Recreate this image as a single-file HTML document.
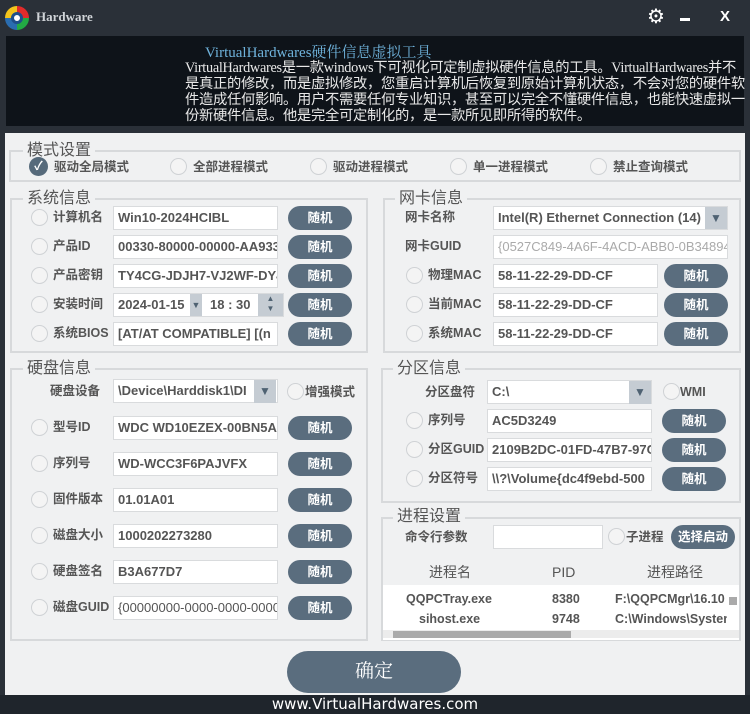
<!DOCTYPE html>
<html><head><meta charset="utf-8"><style>
*{margin:0;padding:0;box-sizing:border-box}
body{width:750px;height:714px;background:#2a3038;position:relative;overflow:hidden;font-family:"Liberation Sans","Noto Sans CJK SC",sans-serif}
.a{position:absolute}
.panel{left:5px;top:133px;width:740px;height:562px;background:#f0f1f2}
.banner{left:6px;top:36px;width:738px;height:90px;background:#0e1319}
.box{position:absolute;border:2px solid #d7d9db;background:#f0f1f2}
.lg{position:absolute;background:#f0f1f2;font-size:16px;color:#555;padding:0 4px;line-height:18px}
.rd{position:absolute;width:17px;height:17px;border-radius:50%;border:1px solid #cfd2d5;background:#f4f4f4}
.lb{position:absolute;font-size:12.5px;font-weight:bold;color:#555;line-height:16px;white-space:nowrap}
.in{position:absolute;height:24px;background:#fff;border:1px solid #d9dbdd;font-size:13px;font-weight:bold;color:#555;line-height:22px;padding-left:4px;overflow:hidden;white-space:nowrap;font-family:"Liberation Sans","Noto Sans CJK SC",sans-serif}
.bt{position:absolute;width:64px;height:24px;border-radius:12px;background:#5a6d7e;color:#fff;font-size:12.5px;font-weight:bold;text-align:center;line-height:24px}
.dd{position:absolute;width:22px;height:22px;background:#c5ccd3;color:#4f6272;font-size:12px;text-align:center;line-height:22px}
.tb{position:absolute;font-size:12.5px;font-weight:bold;color:#555;line-height:16px;white-space:nowrap;overflow:hidden}
</style></head><body>
<div class="a" style="left:5px;top:6px;width:24px;height:24px;border-radius:50%;background:conic-gradient(#e12b2b 0 90deg,#22aa44 90deg 180deg,#2a6db0 180deg 270deg,#f2c41c 270deg 360deg)"></div>
<div class="a" style="left:11px;top:12px;width:12px;height:12px;border-radius:50%;background:#fff;border:3px solid #1e4f8a"></div>
<div class="a" style="left:36px;top:9px;font-family:'Liberation Serif',serif;font-size:13px;font-weight:bold;color:#d0d4d8">Hardware</div>
<div class="a" style="left:647px;top:7px;color:#fff;font-size:20px;line-height:20px">⚙</div>
<div class="a" style="left:680px;top:18px;width:10px;height:3px;background:#fff"></div>
<div class="a" style="left:720px;top:8px;color:#fff;font-size:15px;font-weight:bold">X</div>
<div class="a banner"></div>
<div class="a" style="left:205px;top:41px;font-family:'Liberation Serif','Noto Serif CJK SC',serif;font-size:15px;color:#6fb3dc">VirtualHardwares硬件信息虚拟工具</div>
<div class="a" style="left:185px;top:60px;width:562px;font-family:'Liberation Serif','Noto Sans CJK SC',serif;font-size:14.3px;line-height:16px;color:#e8e8e8;letter-spacing:-0.3px">VirtualHardwares是一款windows下可视化可定制虚拟硬件信息的工具。VirtualHardwares并不是真正的修改，而是虚拟修改，您重启计算机后恢复到原始计算机状态，不会对您的硬件软件造成任何影响。用户不需要任何专业知识，甚至可以完全不懂硬件信息，也能快速虚拟一份新硬件信息。他是完全可定制化的，是一款所见即所得的软件。</div>
<div class="a panel"></div>

<div class="box" style="left:9px;top:150px;width:732px;height:32px"></div>
<div class="lg" style="left:23px;top:142px">模式设置</div>
<div class="a" style="left:29px;top:157px;width:19px;height:19px;border-radius:50%;background:#566a7b;color:#fff;font-size:12px;text-align:center;line-height:19px;font-weight:bold">✓</div>
<div class="lb" style="left:54px;top:159px">驱动全局模式</div>
<div class="rd" style="left:170px;top:158px"></div><div class="lb" style="left:193px;top:159px">全部进程模式</div>
<div class="rd" style="left:310px;top:158px"></div><div class="lb" style="left:333px;top:159px">驱动进程模式</div>
<div class="rd" style="left:450px;top:158px"></div><div class="lb" style="left:473px;top:159px">单一进程模式</div>
<div class="rd" style="left:590px;top:158px"></div><div class="lb" style="left:613px;top:159px">禁止查询模式</div>

<div class="box" style="left:10px;top:198px;width:358px;height:155px"></div>
<div class="lg" style="left:23px;top:190px">系统信息</div>
<div class="rd" style="left:31px;top:209px"></div><div class="lb" style="left:53px;top:209px">计算机名</div><div class="in" style="left:113px;top:206px;width:165px">Win10-2024HCIBL</div><div class="bt" style="left:288px;top:206px">随机</div>
<div class="rd" style="left:31px;top:238px"></div><div class="lb" style="left:53px;top:238px">产品ID</div><div class="in" style="left:113px;top:235px;width:165px">00330-80000-00000-AA933</div><div class="bt" style="left:288px;top:235px">随机</div>
<div class="rd" style="left:31px;top:267px"></div><div class="lb" style="left:53px;top:267px">产品密钥</div><div class="in" style="left:113px;top:264px;width:165px">TY4CG-JDJH7-VJ2WF-DY4</div><div class="bt" style="left:288px;top:264px">随机</div>
<div class="rd" style="left:31px;top:296px"></div><div class="lb" style="left:53px;top:296px">安装时间</div><div class="in" style="left:113px;top:293px;width:171px">2024-01-15</div>
<div class="a" style="left:210px;top:297px;font-size:13px;font-weight:bold;color:#555;line-height:16px">18 : 30</div>
<div class="a" style="left:190px;top:294px;width:12px;height:22px;background:#c5ccd3;color:#4f6272;font-size:9px;text-align:center;line-height:22px">▼</div>
<div class="a" style="left:258px;top:294px;width:25px;height:22px;background:#c5ccd3;color:#4f6272;font-size:8px;text-align:center;line-height:10px">▲<br>▼</div>
<div class="bt" style="left:288px;top:293px">随机</div>
<div class="rd" style="left:31px;top:325px"></div><div class="lb" style="left:53px;top:325px">系统BIOS</div><div class="in" style="left:113px;top:322px;width:165px">[AT/AT COMPATIBLE] [(n</div><div class="bt" style="left:288px;top:322px">随机</div>

<div class="box" style="left:383px;top:198px;width:358px;height:155px"></div>
<div class="lg" style="left:395px;top:190px">网卡信息</div>
<div class="lb" style="left:405px;top:209px">网卡名称</div><div class="in" style="left:493px;top:206px;width:235px">Intel(R) Ethernet Connection (14)</div><div class="dd" style="left:705px;top:207px">▼</div>
<div class="lb" style="left:405px;top:238px">网卡GUID</div><div class="in" style="left:493px;top:235px;width:235px;color:#aaa;font-weight:normal">{0527C849-4A6F-4ACD-ABB0-0B34894</div>
<div class="rd" style="left:406px;top:267px"></div><div class="lb" style="left:428px;top:267px">物理MAC</div><div class="in" style="left:493px;top:264px;width:165px">58-11-22-29-DD-CF</div><div class="bt" style="left:664px;top:264px">随机</div>
<div class="rd" style="left:406px;top:296px"></div><div class="lb" style="left:428px;top:296px">当前MAC</div><div class="in" style="left:493px;top:293px;width:165px">58-11-22-29-DD-CF</div><div class="bt" style="left:664px;top:293px">随机</div>
<div class="rd" style="left:406px;top:325px"></div><div class="lb" style="left:428px;top:325px">系统MAC</div><div class="in" style="left:493px;top:322px;width:165px">58-11-22-29-DD-CF</div><div class="bt" style="left:664px;top:322px">随机</div>

<div class="box" style="left:10px;top:368px;width:358px;height:273px"></div>
<div class="lg" style="left:23px;top:360px">硬盘信息</div>
<div class="lb" style="left:50px;top:383px">硬盘设备</div><div class="in" style="left:113px;top:379px;width:165px">\Device\Harddisk1\DI</div><div class="dd" style="left:254px;top:380px;height:23px">▼</div>
<div class="rd" style="left:287px;top:383px"></div><div class="lb" style="left:305px;top:384px">增强模式</div>
<div class="rd" style="left:31px;top:419px"></div><div class="lb" style="left:53px;top:419px">型号ID</div><div class="in" style="left:113px;top:416px;width:165px">WDC WD10EZEX-00BN5A0</div><div class="bt" style="left:288px;top:416px">随机</div>
<div class="rd" style="left:31px;top:455px"></div><div class="lb" style="left:53px;top:455px">序列号</div><div class="in" style="left:113px;top:452px;width:165px">WD-WCC3F6PAJVFX</div><div class="bt" style="left:288px;top:452px">随机</div>
<div class="rd" style="left:31px;top:491px"></div><div class="lb" style="left:53px;top:491px">固件版本</div><div class="in" style="left:113px;top:488px;width:165px">01.01A01</div><div class="bt" style="left:288px;top:488px">随机</div>
<div class="rd" style="left:31px;top:527px"></div><div class="lb" style="left:53px;top:527px">磁盘大小</div><div class="in" style="left:113px;top:524px;width:165px">1000202273280</div><div class="bt" style="left:288px;top:524px">随机</div>
<div class="rd" style="left:31px;top:563px"></div><div class="lb" style="left:53px;top:563px">硬盘签名</div><div class="in" style="left:113px;top:560px;width:165px">B3A677D7</div><div class="bt" style="left:288px;top:560px">随机</div>
<div class="rd" style="left:31px;top:599px"></div><div class="lb" style="left:53px;top:599px">磁盘GUID</div><div class="in" style="left:113px;top:596px;width:165px;font-weight:normal">{00000000-0000-0000-0000</div><div class="bt" style="left:288px;top:596px">随机</div>

<div class="box" style="left:381px;top:368px;width:360px;height:135px"></div>
<div class="lg" style="left:393px;top:360px">分区信息</div>
<div class="lb" style="left:425px;top:384px">分区盘符</div><div class="in" style="left:487px;top:380px;width:165px">C:\</div><div class="dd" style="left:629px;top:381px;height:23px">▼</div>
<div class="rd" style="left:663px;top:383px"></div><div class="lb" style="left:680px;top:384px">WMI</div>
<div class="rd" style="left:406px;top:412px"></div><div class="lb" style="left:428px;top:412px">序列号</div><div class="in" style="left:487px;top:409px;width:165px">AC5D3249</div><div class="bt" style="left:662px;top:409px">随机</div>
<div class="rd" style="left:406px;top:441px"></div><div class="lb" style="left:428px;top:441px">分区GUID</div><div class="in" style="left:487px;top:438px;width:165px">2109B2DC-01FD-47B7-97C</div><div class="bt" style="left:662px;top:438px">随机</div>
<div class="rd" style="left:406px;top:470px"></div><div class="lb" style="left:428px;top:470px">分区符号</div><div class="in" style="left:487px;top:467px;width:165px">\\?\Volume{dc4f9ebd-500</div><div class="bt" style="left:662px;top:467px">随机</div>

<div class="box" style="left:381px;top:517px;width:360px;height:124px"></div>
<div class="lg" style="left:393px;top:508px">进程设置</div>
<div class="lb" style="left:405px;top:529px">命令行参数</div><div class="in" style="left:493px;top:525px;width:110px"></div>
<div class="rd" style="left:608px;top:528px"></div><div class="lb" style="left:626px;top:529px">子进程</div>
<div class="bt" style="left:671px;top:525px;width:64px">选择启动</div>
<div class="a" style="left:383px;top:559px;width:356px;height:81px;background:#fff"></div>
<div class="a" style="left:383px;top:559px;width:356px;height:26px;background:#f0f1f2;font-size:14px;color:#555;line-height:26px">
<span class="a" style="left:46px">进程名</span><span class="a" style="left:169px">PID</span><span class="a" style="left:264px">进程路径</span></div>
<div class="tb" style="left:406px;top:591px">QQPCTray.exe</div>
<div class="tb" style="left:552px;top:591px">8380</div>
<div class="tb" style="left:615px;top:591px;width:112px">F:\QQPCMgr\16.10</div>
<div class="tb" style="left:419px;top:611px">sihost.exe</div>
<div class="tb" style="left:552px;top:611px">9748</div>
<div class="tb" style="left:615px;top:611px;width:112px">C:\Windows\System</div>
<div class="a" style="left:383px;top:630px;width:356px;height:8px;background:#ececec"></div>
<div class="a" style="left:393px;top:631px;width:178px;height:7px;background:#aaa"></div>
<div class="a" style="left:729px;top:597px;width:8px;height:8px;background:#aaa"></div>

<div class="a" style="left:287px;top:651px;width:174px;height:42px;border-radius:21px;background:#5a6d7e;color:#fff;font-family:'Liberation Serif','Noto Serif CJK SC',serif;font-size:19px;text-align:center;line-height:42px">确定</div>
<div class="a" style="left:0;top:695px;width:750px;height:19px;background:#1f252c"></div>
<div class="a" style="left:0;top:695px;width:750px;text-align:center;color:#fff;font-size:15px;line-height:19px;font-family:'DejaVu Sans',sans-serif">www.VirtualHardwares.com</div>
</body></html>
